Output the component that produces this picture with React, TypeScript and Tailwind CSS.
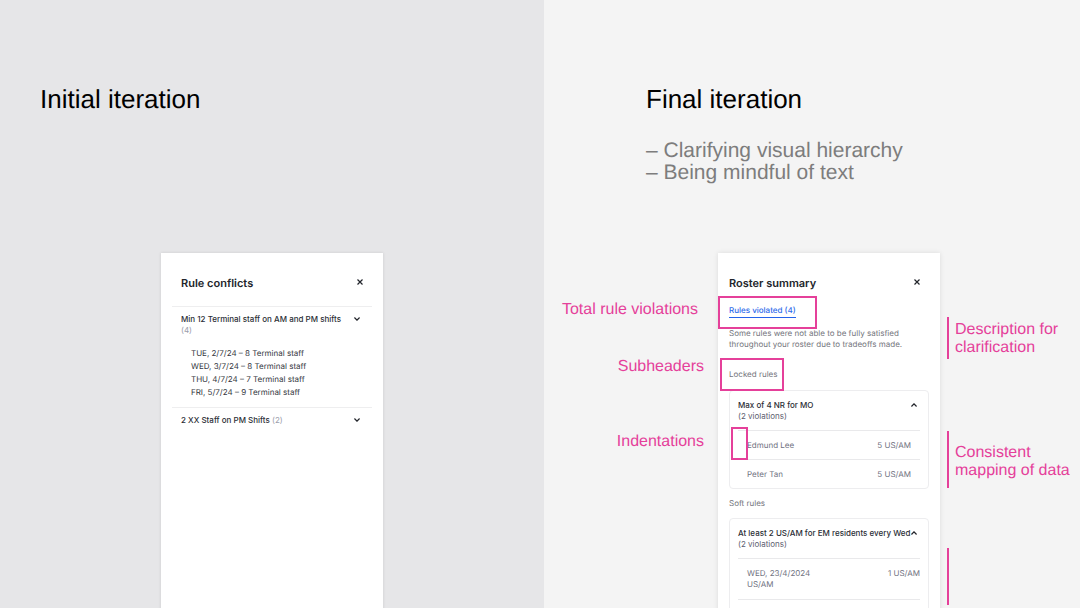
import type { ReactNode } from "react";

function CloseIcon() {
  return (
    <svg viewBox="0 0 6 6" className="size-[6px]" fill="none" stroke="#22252b" strokeWidth="1.2">
      <path d="M0.5 0.5 5.5 5.5M5.5 0.5 0.5 5.5" />
    </svg>
  );
}

function Chevron({ up = false }: { up?: boolean }) {
  return (
    <svg viewBox="0 0 6 4" className="h-[4px] w-[6px] shrink-0" fill="none" stroke="#22252b" strokeWidth="1.3">
      <path d={up ? "M0.4 3.5 3 0.9 5.6 3.5" : "M0.4 0.5 3 3.1 5.6 0.5"} />
    </svg>
  );
}

function PanelHeader({ title }: { title: string }) {
  return (
    <div className="flex items-start justify-between pt-5 pr-[9px]">
      <h2 className="text-[11px] leading-5 font-semibold text-[#22252b]">{title}</h2>
      <button type="button" aria-label={"Close " + title} className="flex h-[18px] items-center">
        <CloseIcon />
      </button>
    </div>
  );
}

function Conflict({ title, count, children }: { title: string; count: number; children?: ReactNode }) {
  return (
    <section className="border-t border-[#eeeeef] pt-[7px] pr-3 pb-2 pl-[9px]">
      <button type="button" className="flex w-full items-start justify-between text-left">
        <span className="max-w-[164px] font-medium text-[#2b2e36]">
          {title} <span className="font-normal text-[#9b9dab]">({count})</span>
        </span>
        <span className="flex h-[10px] items-center">
          <Chevron />
        </span>
      </button>
      {children}
    </section>
  );
}

function Highlight({ className }: { className: string }) {
  return <span aria-hidden="true" className={"pointer-events-none absolute border-2 border-[#e5409a] " + className} />;
}

function RuleCard({ title, children }: { title: string; children: ReactNode }) {
  return (
    <section className="rounded border border-[#ededef] px-2 pt-[9px]">
      <button type="button" className="flex w-full items-start justify-between pb-2 text-left">
        <span>
          <span className="block font-medium whitespace-nowrap text-[#2b2e36]">{title}</span>
          <span className="block text-[#5d6070]">(2 violations)</span>
        </span>
        <span className="flex h-[10px] items-center pr-[3px]">
          <Chevron up />
        </span>
      </button>
      <table className="w-full border-separate border-spacing-0 text-[#70727f]">
        <tbody>{children}</tbody>
      </table>
    </section>
  );
}

const cell = "border-t border-[#e9e9eb] align-top ";

export default function App() {
  return (
    <main className="grid h-screen grid-cols-[68fr_67fr] overflow-hidden font-['Liberation_Sans',sans-serif] [text-rendering:geometricPrecision]">
      <section className="flex flex-col bg-[#e6e6e8]">
        <header className="h-[253px] shrink-0 pt-[79px] pl-10">
          <h1 className="text-[26px] leading-10 text-black">Initial iteration</h1>
        </header>
        <div className="mx-auto w-[222px] flex-1 bg-white px-[11px] font-[Inter,sans-serif] text-[8px] leading-[11px] shadow-[0_0_3px_rgba(0,0,0,0.12)]">
          <div className="pb-[13px] pl-[9px]">
            <PanelHeader title="Rule conflicts" />
          </div>
          <Conflict title="Min 12 Terminal staff on AM and PM shifts" count={4}>
            <ul className="mt-[11px] pl-[10px] leading-[13px] text-[#33363e]">
              <li>TUE, 2/7/24 – 8 Terminal staff</li>
              <li>WED, 3/7/24 – 8 Terminal staff</li>
              <li>THU, 4/7/24 – 7 Terminal staff</li>
              <li>FRI, 5/7/24 – 9 Terminal staff</li>
            </ul>
          </Conflict>
          <Conflict title="2 XX Staff on PM Shifts" count={2} />
        </div>
      </section>

      <section className="flex flex-col bg-[#f4f4f4]">
        <header className="h-[253px] shrink-0 pt-[79px] pl-[102px]">
          <h1 className="text-[26px] leading-10 text-black">Final iteration</h1>
          <ul className="mt-[21px] text-[21px] leading-[22px] text-[#7d7d7d]">
            <li>– Clarifying visual hierarchy</li>
            <li>– Being mindful of text</li>
          </ul>
        </header>
        <div className="grid min-h-0 flex-1 grid-cols-[174fr_222px_140fr] text-[16px] leading-[18px] text-[#e5409a]">
          <div className="pt-12 pr-[14px] text-right whitespace-nowrap">
            <p className="pr-[6px]">Total rule violations</p>
            <p className="mt-[39px]">Subheaders</p>
            <p className="mt-[57px]">Indentations</p>
          </div>

          <div className="bg-white px-[11px] font-[Inter,sans-serif] text-[8px] leading-[11px] text-[#74757c] shadow-[0_0_5px_rgba(0,0,0,0.1)]">
            <PanelHeader title="Roster summary" />
            <div className="relative mt-3 w-fit">
              <a href="#violated" className="block border-b border-[#2563eb] pb-px font-medium text-[#2f6bea]">
                Rules violated (4)
              </a>
              <Highlight className="-top-[9px] -left-[11px] h-[33px] w-[99px]" />
            </div>
            <p className="mt-[10px] whitespace-nowrap">
              Some rules were not able to be fully satisfied
              <br />
              throughout your roster due to tradeoffs made.
            </p>
            <div className="relative mt-[19px] w-fit">
              <h3>Locked rules</h3>
              <Highlight className="-top-[11px] -left-[9px] h-[33px] w-[64px]" />
            </div>
            <div className="mt-[10px]">
              <RuleCard title="Max of 4 NR for MO">
                <tr>
                  <td className={cell + "relative pt-[9px] pb-2 pl-[9px]"}>
                    Edmund Lee
                    <Highlight className="-top-[4px] -left-[7px] h-[33px] w-[17px]" />
                  </td>
                  <td className={cell + "pt-[9px] pr-[9px] pb-2 text-right"}>5 US/AM</td>
                </tr>
                <tr>
                  <td className={cell + "pt-[9px] pb-2 pl-[9px]"}>Peter Tan</td>
                  <td className={cell + "pt-[9px] pr-[9px] pb-2 text-right"}>5 US/AM</td>
                </tr>
              </RuleCard>
            </div>
            <h3 className="my-[9px]">Soft rules</h3>
            <RuleCard title="At least 2 US/AM for EM residents every Wed">
              <tr>
                <td className={cell + "pt-[9px] pb-[9px] pl-[9px]"}>
                  WED, 23/4/2024
                  <br />
                  US/AM
                </td>
                <td className={cell + "pt-[9px] pb-[9px] text-right"}>1 US/AM</td>
              </tr>
              <tr>
                <td className={cell + "h-8"} />
                <td className={cell + "h-8"} />
              </tr>
            </RuleCard>
          </div>

          <div className="flex flex-col pt-16 pl-[7px] whitespace-nowrap">
            <p className="flex h-[42px] shrink-0 items-center border-l-2 border-[#e5409a] pt-px pl-[6px]">
              Description for
              <br />
              clarification
            </p>
            <p className="mt-[72px] flex h-[57px] shrink-0 items-center border-l-2 border-[#e5409a] pt-[5px] pl-[6px]">
              Consistent
              <br />
              mapping of data
            </p>
            <p className="mt-[60px] h-[57px] shrink-0 border-l-2 border-[#e5409a]" />
          </div>
        </div>
      </section>
    </main>
  );
}
